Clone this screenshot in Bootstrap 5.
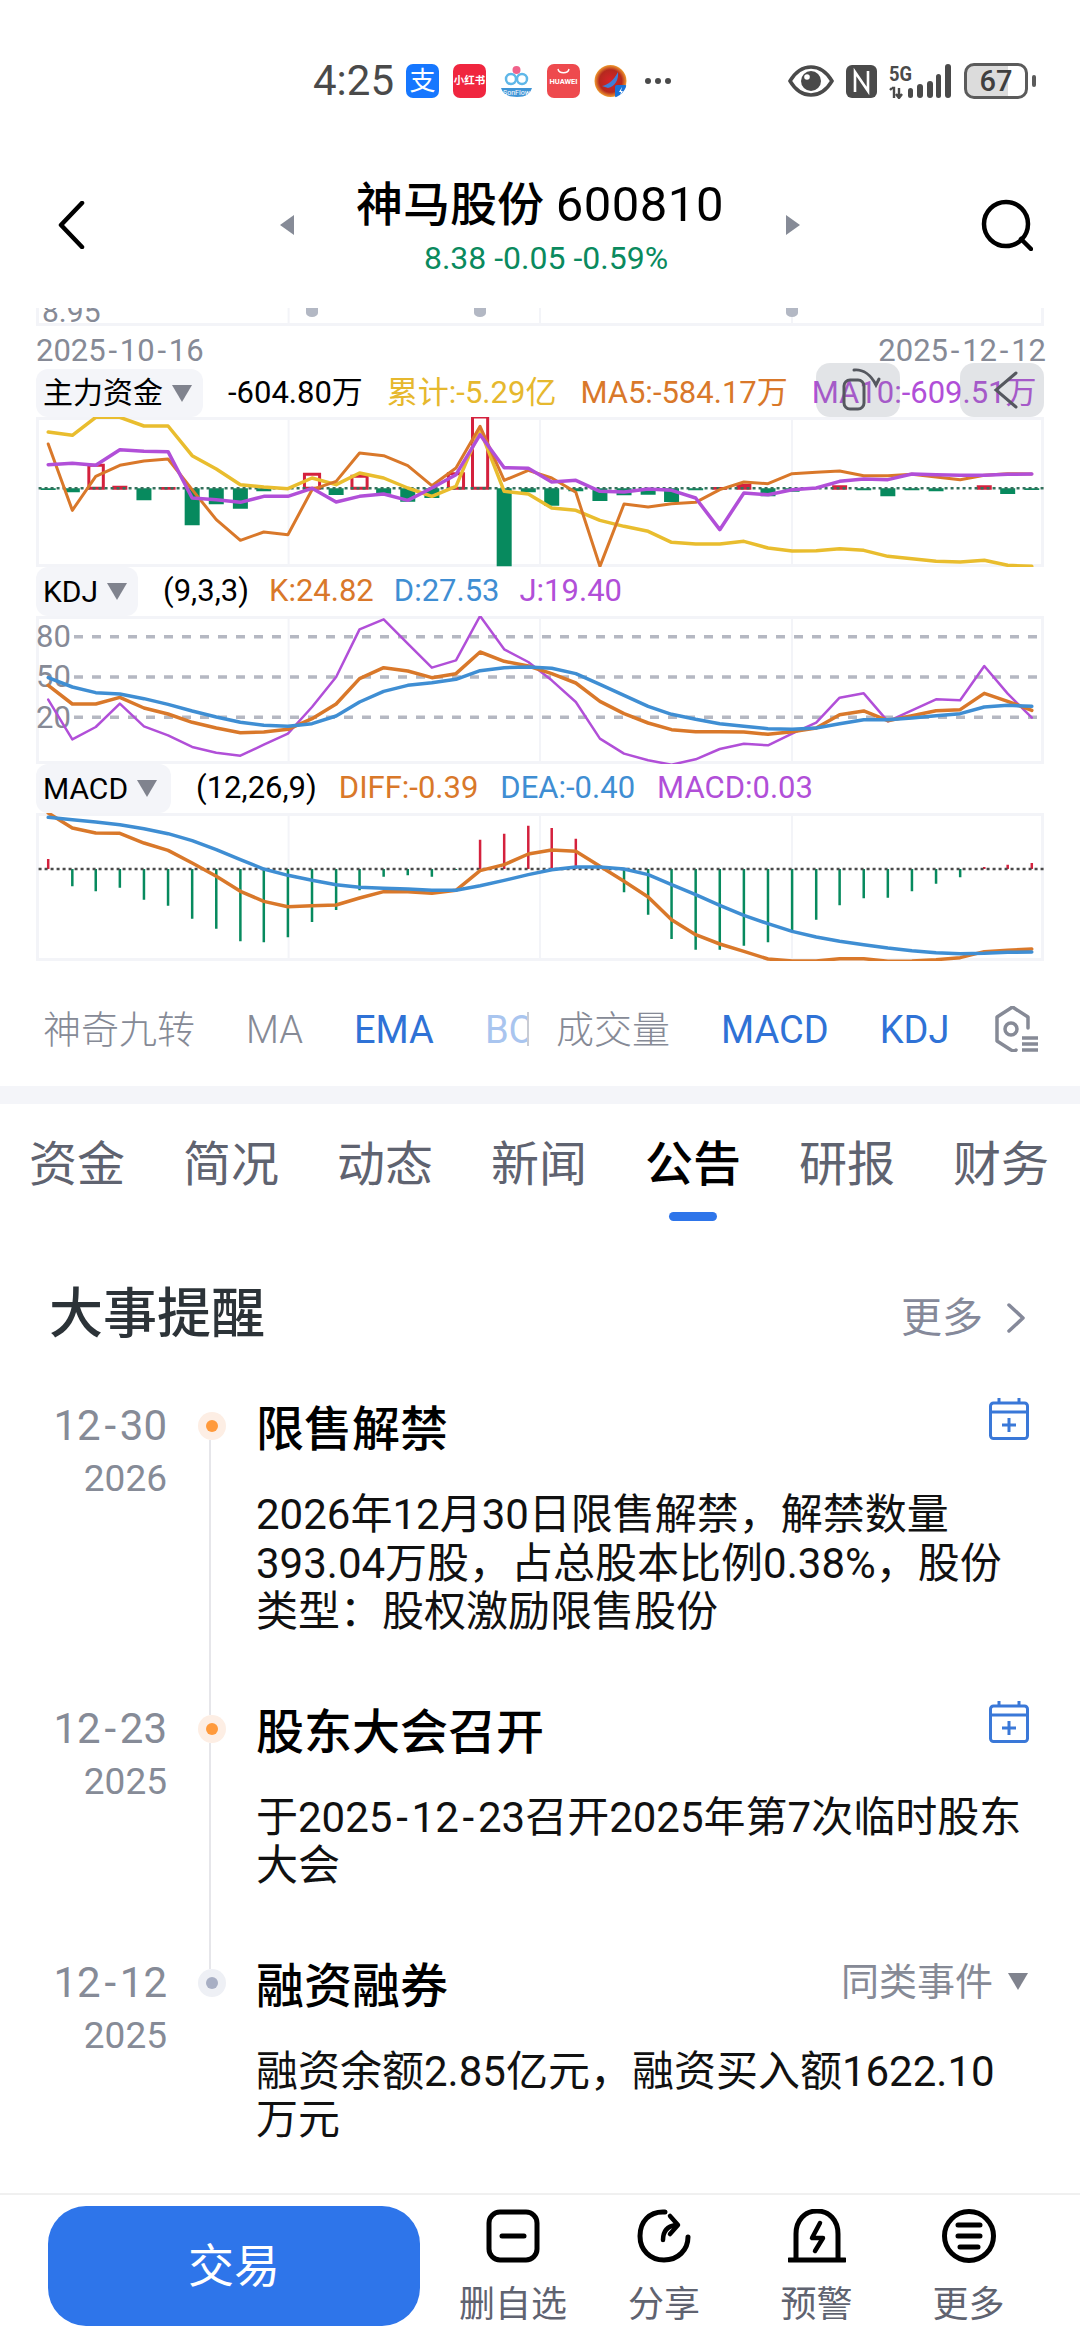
<!DOCTYPE html>
<html lang="zh">
<head>
<meta charset="utf-8">
<title>神马股份 600810</title>
<link href="https://cdn.jsdelivr.net/npm/bootstrap@5.3.0/dist/css/bootstrap.min.css" rel="stylesheet">
<style>
html,body{margin:0;background:#fff}
body{font-family:Roboto,"Noto Sans CJK SC",sans-serif;width:1080px;height:2340px;overflow:hidden;color:#000}
svg{display:block;flex:none}
.ln{fill:none;stroke-linejoin:round;stroke-linecap:round;vector-effect:non-scaling-stroke}
.bar,.hol{vector-effect:non-scaling-stroke}
.bar{fill:none}
.hol{fill:#fff;stroke:#d4213d;stroke-width:3}
.y{stroke:#e9bd2e;stroke-width:3.5}.o{stroke:#d9782a;stroke-width:3}.p{stroke:#b14fd8;stroke-width:3.5}.pt{stroke:#b14fd8;stroke-width:2.5}.b{stroke:#3f8ed3;stroke-width:3.5}.ot{stroke:#d9782a;stroke-width:3.5}
.rd{stroke:#d4213d}.gr{stroke:#078a5e}
.frm{fill:none;stroke:#f3f4f8;stroke-width:3}.grd{stroke:#f3f4f8;stroke-width:2}
.hy{margin:0 .09em}
.statusbar{height:162px;padding:0 44px 0 313px;color:#4a4a4a}
.clock{font-size:42px;line-height:1;width:93px}
.appi{width:33px;height:34px;border-radius:7px;margin-right:14px;color:#fff;overflow:hidden}
.ali{background:#1677ff;font-size:26px;line-height:34px;text-align:center}
.xhs{background:#f0263f;font-size:10.5px;line-height:34px;text-align:center;font-weight:700;white-space:nowrap}
.hw{background:#ee4a4e;font-size:7.5px;text-align:center;font-weight:700;line-height:1}
.dots{margin-left:4px}
.gap12{margin-left:12px}
.batt{width:64px;height:36px;border:3px solid #5b5b5b;border-radius:10px;font-size:29px;font-weight:500;line-height:30px;text-align:center;background:linear-gradient(90deg,#dcdcdc 70%,#fff 70%);color:#3f3f3f;margin-left:13px}
.nub{width:4px;height:12px;background:#5b5b5b;border-radius:2px;margin-left:4px}
.hdr{height:146px;padding:0 47px 0 57px}
.backi{margin-top:39px}
.srchi{margin-top:37px}
.ttl{font-size:47px;line-height:52px;font-weight:500;white-space:nowrap}
.dg{font-size:49px;letter-spacing:.5px;font-weight:400}
.subt{font-size:32px;line-height:32px;color:#0a8a5e;margin-top:11px;white-space:nowrap;padding-left:12px}
.hmid{width:520px;margin:17px 0 0 14px}
.tria{margin-top:36px}
.dts{height:43px;padding:7px 34px 0 36px;font-size:31px;line-height:36px;color:#868a96}
.lrow{height:48px;padding-left:36px;font-size:31px;line-height:48px;white-space:nowrap}
.lrow.h49{height:49px}
.gap20{margin-right:20px}
.gap22{margin-right:22px}
.chip{background:#f4f5f9;border-radius:12px;height:100%;padding:0 11px 0 7px;gap:9px;margin-right:25px;font-size:30px}
.chipw{padding-right:14px}
.tri{width:0;height:0;border-left:10px solid transparent;border-right:10px solid transparent;border-top:17px solid #80838e}
.cy{color:#e6b82e}.co{color:#d9782a}.cp{color:#b14fd8}.cb{color:#3f8ed3}
.ovb{position:absolute;top:-6px;width:84px;height:54px;background:rgba(125,130,145,.22);border-radius:14px}
.ovb1{left:816px}.ovb2{left:960px}
.inds{height:125px;font-size:38px;line-height:44px;color:#868a96;white-space:nowrap;font-weight:300;padding-left:43px}
.indt{margin-top:47px}
.ml51{margin-left:51px}
.ml25{margin-left:27px}
.blu{color:#2f72d6;font-weight:400}
.fade1{color:#a9c5ef;width:42px;overflow:hidden;height:44px}
.vbar{width:2px;height:34px;background:#c9ccd4;margin-top:51px}
.setic{margin:45px 0 0 41px}
.band{height:18px;background:#f4f5f9}
.tabsr{padding:31px 31px 0 29px;font-size:48px;line-height:60px;color:#5f6370}
.tabi{width:96px;text-align:center;white-space:nowrap}
.tabon{color:#000;font-weight:500}
.tabbar{width:48px;height:9px;border-radius:5px;background:#2e75ea;margin:17px auto 0}
.sech{margin:59px 55px 0 49px;height:70px}
.secht{font-size:54px;line-height:70px;color:#2c3338;font-weight:500}
.more{font-size:41px;line-height:70px;color:#85899a;gap:24px;margin-top:6px}
.tl{margin-top:50px}
.tli{padding-bottom:66px}
.dcol{width:167px;text-align:right;flex:none;color:#868b97}
.dm{font-size:42px;line-height:52px}
.dy{font-size:37px;line-height:54px}
.dotc{width:89px;flex:none;position:relative}
.rail{position:absolute;left:42px;top:40px;bottom:-78px;width:2px;background:#e6e6ea}
.dot{position:absolute;left:31px;top:12px;width:28px;height:28px;border-radius:50%;background:#fdeee4}
.dot::after{content:"";position:absolute;left:8px;top:8px;width:12px;height:12px;border-radius:50%;background:#ff9a3c}
.dot.off{background:#eef0f5}
.dot.off::after{background:#a8afc4}
.tcol{width:774px;flex:none}
.tlt{font-size:48px;line-height:60px;font-weight:500}
.tbd{font-size:42px;line-height:48.5px;margin-top:31px;color:#111}
.cal{margin:-2px 1px 0 0}
.same{font-size:38px;line-height:50px;color:#868a96;gap:15px;margin:0 2px 0 0;height:50px}
.botb{height:148px;border-top:2px solid #f0f0f0;padding-left:48px}
.trade{width:372px;height:120px;margin-top:11px;border-radius:38px;background:#2e75ea;color:#fff;font-size:46px;border:0;flex:none}
.trade:hover,.trade:focus{background:#2e75ea;color:#fff}
.acts{padding-left:39px;color:#5f6370;font-size:36px;line-height:40px;white-space:nowrap}
.acti{padding-top:14px}
.acti svg{margin:0 auto 22px}
.acti1{width:108px;margin-right:61px;flex:none}
.acti2{width:72px;margin-right:80px;flex:none}
.acti3{width:73px;margin-right:79px;flex:none}
.acti4{width:73px;flex:none}
</style>
</head>
<body class="d-flex flex-column">
<div class="flex-grow-1 overflow-hidden">

<div class="statusbar d-flex align-items-center justify-content-between">
  <div class="d-flex align-items-center">
    <div class="clock">4:25</div>
    <div class="appi ali">支</div>
    <div class="appi xhs">小红书</div>
    <div class="appi"><svg width="33" height="34" viewBox="0 0 33 34"><circle cx="16.5" cy="6" r="4" fill="#f0628a"/><circle cx="11" cy="15" r="5" fill="none" stroke="#5fb7e8" stroke-width="2.5"/><circle cx="22" cy="15" r="5" fill="none" stroke="#5fb7e8" stroke-width="2.5"/><path d="M1 24h31c-2 6-6 9-15 9S3 30 1 24z" fill="#3f95d6"/><text x="16.5" y="31" font-size="7" fill="#fff" text-anchor="middle" font-family="Roboto">SonFlow</text></svg></div>
    <div class="appi hw"><svg width="33" height="14" viewBox="0 0 33 14"><path d="M11 5c1 5 10 5 11 0" fill="none" stroke="#fff" stroke-width="1.4"/></svg><div>HUAWEI</div></div>
    <div class="appi rounded-circle"><svg width="33" height="34" viewBox="0 0 33 34"><defs><radialGradient id="gz"><stop offset="0" stop-color="#d8232a"/><stop offset=".7" stop-color="#b5291f"/><stop offset="1" stop-color="#f09a2e"/></radialGradient></defs><circle cx="16.5" cy="17" r="16" fill="url(#gz)"/><path d="M8 22c6-1 12-6 16-14 1 7-3 15-10 16z" fill="#3f7fd8"/><rect x="21" y="21" width="12" height="13" rx="2" fill="#1a73d8"/><path d="M28 23l-3 5h2l-1 4 3-5h-2z" fill="#fff"/></svg></div>
    <svg class="dots" width="26" height="6" viewBox="0 0 26 6"><circle cx="3" cy="3" r="3" fill="#4a4a4a"/><circle cx="13" cy="3" r="3" fill="#4a4a4a"/><circle cx="23" cy="3" r="3" fill="#4a4a4a"/></svg>
  </div>
  <div class="d-flex align-items-center">
    <svg width="46" height="32" viewBox="0 0 46 32"><path d="M2 16C8 6 15 2 23 2s15 4 21 14c-6 10-13 14-21 14S8 26 2 16z" fill="none" stroke="#4a4a4a" stroke-width="3.5"/><circle cx="23" cy="16" r="10" fill="#4a4a4a"/><circle cx="19" cy="12" r="2.8" fill="#fff"/></svg>
    <svg class="gap12" width="31" height="33" viewBox="0 0 31 33"><rect width="31" height="33" rx="6" fill="#4a4a4a"/><path d="M9 27V7l13 19V6" fill="none" stroke="#fff" stroke-width="2.6"/></svg>
    <svg class="gap12" width="62" height="36" viewBox="0 0 62 36"><text x="0" y="18" font-size="20" font-weight="700" fill="#4a4a4a" font-family="Roboto" textLength="23" lengthAdjust="spacingAndGlyphs">5G</text><path d="M3 25h2v10M1 27l2-2M10 25v9M7 31l3 4 3-4" fill="none" stroke="#4a4a4a" stroke-width="2.4"/><rect x="19" y="25" width="5" height="10" rx="2.5" fill="#4a4a4a"/><rect x="28" y="21" width="6" height="14" rx="3" fill="#4a4a4a"/><rect x="38" y="18" width="6" height="17" rx="3" fill="#4a4a4a"/><rect x="47" y="11" width="5" height="24" rx="2.5" fill="#4a4a4a"/><rect x="56" y="1" width="6" height="34" rx="3" fill="#4a4a4a"/></svg>
    <div class="batt">67</div>
    <div class="nub"></div>
  </div>
</div>

<div class="hdr d-flex align-items-start justify-content-between">
  <svg class="backi" width="28" height="48" viewBox="0 0 28 48"><path d="M25 2L4 24l21 22" fill="none" stroke="#000" stroke-width="4.5" stroke-linecap="round" stroke-linejoin="round"/></svg>
  <div class="hmid d-flex justify-content-between">
    <svg class="tria" width="14" height="20" viewBox="0 0 14 20"><path d="M14 0v20L0 10z" fill="#868b97"/></svg>
    <div class="text-center"><div class="ttl">神马股份 <span class="dg">600810</span></div><div class="subt">8.38 -0.05 -0.59%</div></div>
    <svg class="tria" width="14" height="20" viewBox="0 0 14 20"><path d="M0 0v20l14-10z" fill="#868b97"/></svg>
  </div>
  <svg class="srchi" width="52" height="52" viewBox="0 0 52 52"><circle cx="25" cy="25" r="22" fill="none" stroke="#000" stroke-width="4.5"/><path d="M40 40l10 10" stroke="#000" stroke-width="4.5" stroke-linecap="round"/></svg>
</div>

<svg width="1080" height="18" viewBox="0 0 1080 18"><text x="42" y="14" font-size="30" fill="#868a96" font-family="Roboto">8.95</text><path class="grd" d="M288.6 0V16M540 0V16M792 0V16"/><path d="M37.5 0V16.5H1042.5V0" class="frm"/><path d="M306 0h12v5a6 4 0 0 1-12 0zM474 0h12v5a6 4 0 0 1-12 0zM786 0h12v5a6 4 0 0 1-12 0z" fill="#b3b8c4"/></svg>

<div class="dts d-flex justify-content-between"><span>2025<span class="hy">-</span>10<span class="hy">-</span>16</span><span>2025<span class="hy">-</span>12<span class="hy">-</span>12</span></div>

<div class="lrow d-flex position-relative">
  <div class="chip d-flex align-items-center"><span>主力资金</span><span class="tri"></span></div>
  <span class="me-4">-604.80万</span><span class="cy me-4">累计:-5.29亿</span><span class="co me-4">MA5:-584.17万</span><span class="cp">MA10:-609.51万</span>
  <div class="ovb ovb1"><svg width="84" height="54" viewBox="0 0 84 54"><rect x="28" y="17" width="20" height="29" rx="6" fill="none" stroke="#55585f" stroke-width="3"/><path d="M38 7c9-1 17 5 22 15l3-6" fill="none" stroke="#55585f" stroke-width="3" stroke-linecap="round"/></svg></div>
  <div class="ovb ovb2"><svg width="84" height="54" viewBox="0 0 84 54"><path d="M56 10L36 27l20 17" fill="none" stroke="#55585f" stroke-width="3" stroke-linecap="round"/></svg></div>
</div>

<svg width="1080" height="150" viewBox="0 0 1080 150">
  <path class="grd" d="M288.6 0V150M540 0V150M792 0V150"/>
  <rect class="frm" x="37.5" y="1.5" width="1005" height="147"/>
  <g transform="translate(0,-117.33) scale(0.68878,0.33333)">
    <path class="bar gr" stroke-width="15" d="M70 566V571M105 566V578M209 566V602M279 566V677M314 566V614M349 566V627M383 566V575M488 566V586M557 566V582M592 566V606M627 566V595M732 566V800M767 566V578M801 566V618M836 566V575M871 566V604M906 566V587M941 566V585M975 566V607M1010 566V572M1115 566V590M1150 566V576M1254 566V572M1289 566V590M1324 566V572M1359 566V575M1463 566V583M1498 566V571"/>
    <path class="bar rd" stroke-width="15" d="M174 558V570M244 562V570M1045 562V570M1080 552V570M1219 557V570M1429 557V570"/>
    <path class="hol" d="M129 497H150V566H129ZM442 524H464V566H442ZM511 530H533V566H511ZM651 522H673V566H651ZM686 352H708V566H686Z"/>
    <path class="bar" d="M56 566H1516" stroke="#35705c" stroke-width="2.5" stroke-dasharray="3 3"/>
    <polyline class="ln y" points="70,397 105,407 139,353 174,353 209,379 244,379 279,468 314,508 349,555 383,562 418,567 453,535 488,555 522,520 557,535 592,565 627,590 662,560 697,390 732,575 767,583 801,625 836,632 871,662 906,680 941,695 975,728 1010,733 1045,733 1080,725 1115,745 1150,754 1185,753 1219,747 1254,752 1289,770 1324,777 1359,785 1394,787 1429,782 1463,797 1498,800"/>
    <polyline class="ln o" points="70,433 105,632 139,530 174,497 209,484 244,478 279,570 314,660 349,722 383,697 418,705 453,570 488,545 522,460 557,468 592,498 627,558 662,505 697,380 732,542 767,512 801,535 836,578 871,800 906,613 941,622 975,612 1010,608 1045,570 1080,547 1115,552 1150,522 1185,518 1219,514 1254,528 1289,528 1324,524 1359,532 1394,540 1429,527 1463,522 1498,523"/>
    <polyline class="ln p" points="70,495 105,491 139,497 174,450 209,455 244,456 279,595 314,600 349,608 383,590 418,590 453,566 488,607 522,590 557,583 592,602 627,565 662,525 697,405 732,504 767,506 801,547 836,542 871,575 906,577 941,568 975,572 1010,595 1045,690 1080,580 1115,585 1150,570 1185,565 1219,545 1254,538 1289,540 1324,523 1359,525 1394,527 1429,527 1463,524 1498,523"/>
  </g>
</svg>

<div class="lrow h49 d-flex">
  <div class="chip d-flex align-items-center"><span>KDJ</span><span class="tri"></span></div>
  <span class="gap20">(9,3,3)</span><span class="co gap20">K:24.82</span><span class="cb gap20">D:27.53</span><span class="cp">J:19.40</span>
</div>

<svg width="1080" height="148" viewBox="0 0 1080 148">
  <path class="grd" d="M288.6 0V148M540 0V148M792 0V148"/>
  <rect class="frm" x="37.5" y="1.5" width="1005" height="145"/>
  <path d="M74 20.7H1044M74 61H1044M74 101.3H1044" stroke="#b5b8c2" stroke-width="3.5" stroke-dasharray="9 9"/>
  <text x="36" y="31" font-size="31" fill="#868a96" font-family="Roboto">80</text>
  <text x="36" y="71" font-size="31" fill="#868a96" font-family="Roboto">50</text>
  <text x="36" y="112" font-size="31" fill="#868a96" font-family="Roboto">20</text>
  <g transform="translate(0,-55.67) scale(0.68878,0.33333)">
    <polyline class="ln pt" points="70,418 105,537 139,500 174,430 209,498 244,525 279,560 314,577 349,586 383,553 418,520 453,440 488,350 522,207 557,177 592,250 627,322 662,300 697,167 732,267 767,305 801,360 836,425 871,535 906,580 941,600 975,613 1010,597 1045,566 1080,550 1115,555 1150,520 1185,487 1219,412 1254,399 1289,483 1324,450 1359,417 1394,420 1429,317 1463,400 1498,472"/>
    <polyline class="ln ot" points="70,375 105,431 139,431 174,411 209,443 244,461 279,486 314,503 349,517 383,515 418,507 453,475 488,431 522,355 557,322 592,332 627,352 662,340 697,275 732,303 767,317 801,340 836,368 871,423 906,460 941,488 975,508 1010,514 1045,514 1080,515 1115,522 1150,514 1185,503 1219,463 1254,452 1289,481 1324,466 1359,451 1394,448 1429,399 1463,423 1498,450"/>
    <polyline class="ln b" points="70,352 105,380 139,397 174,401 209,415 244,432 279,452 314,470 349,486 383,495 418,498 453,490 488,467 522,425 557,393 592,375 627,367 662,357 697,331 732,322 767,320 801,324 836,340 871,372 906,405 941,438 975,462 1010,477 1045,490 1080,498 1115,505 1150,507 1185,503 1219,490 1254,478 1289,478 1324,473 1359,466 1394,460 1429,440 1463,435 1498,438"/>
  </g>
</svg>

<div class="lrow h49 d-flex">
  <div class="chip chipw d-flex align-items-center"><span>MACD</span><span class="tri"></span></div>
  <span class="gap22">(12,26,9)</span><span class="co gap22">DIFF:-0.39</span><span class="cb gap22">DEA:-0.40</span><span class="cp">MACD:0.03</span>
</div>

<svg width="1080" height="148" viewBox="0 0 1080 148">
  <path class="grd" d="M288.6 0V148M540 0V148M792 0V148"/>
  <rect class="frm" x="37.5" y="1.5" width="1005" height="145"/>
  <g transform="translate(0,-53.33) scale(0.68878,0.33333)">
    <path class="bar gr" stroke-width="2.5" d="M105 328V380M139 328V395M174 328V384M209 328V420M244 328V438M279 328V477M314 328V507M349 328V545M383 328V548M418 328V533M453 328V487M488 328V451M522 328V392M557 328V351M592 328V347M627 328V351M662 328V331M906 328V398M941 328V465M975 328V538M1010 328V570M1045 328V570M1080 328V558M1115 328V548M1150 328V512M1185 328V480M1219 328V437M1254 328V416M1289 328V414M1324 328V395M1359 328V372M1394 328V353"/>
    <path class="bar rd" stroke-width="2.5" d="M70 298V328M697 240V328M732 222V328M767 198V328M801 205V328M836 237V328M1429 322V328M1463 315V328M1498 310V328"/>
    <path class="bar" d="M56 328H1516" stroke="#4a4a4a" stroke-width="2.5" stroke-dasharray="3 3"/>
    <polyline class="ln ot" points="70,160 105,205 139,220 174,221 209,250 244,272 279,310 314,350 349,395 383,425 418,441 453,438 488,436 522,415 557,396 592,396 627,401 662,392 697,333 732,315 767,283 801,271 836,275 871,320 906,365 941,412 975,480 1010,525 1045,553 1080,575 1115,598 1150,604 1185,604 1219,597 1254,597 1289,605 1324,604 1359,600 1394,594 1429,576 1463,572 1498,568"/>
    <polyline class="ln b" points="70,173 105,180 139,187 174,195 209,207 244,222 279,243 314,270 349,300 383,328 418,347 453,362 488,375 522,383 557,386 592,388 627,392 662,392 697,378 732,362 767,345 801,330 836,322 871,322 906,328 941,345 975,375 1010,405 1045,437 1080,467 1115,492 1150,515 1185,532 1219,545 1254,555 1289,565 1324,573 1359,579 1394,582 1429,581 1463,578 1498,577"/>
  </g>
</svg>

<div class="inds d-flex">
  <span class="indt">神奇九转</span>
  <span class="indt ml51">MA</span>
  <span class="indt ml51 blu">EMA</span>
  <span class="indt ml51 blu fade1">BOLL</span>
  <span class="vbar"></span>
  <span class="indt ml25">成交量</span>
  <span class="indt ml51 blu">MACD</span>
  <span class="indt ml51 blu">KDJ</span>
  <svg class="setic" width="48" height="46" viewBox="0 0 48 46"><path d="M21 2L7 11v24l14 9c2 1 4 1 5 0M21 2c1-1 2-1 3 0l14 9v11" fill="none" stroke="#868a96" stroke-width="3.5" stroke-linecap="round" stroke-linejoin="round"/><circle cx="21" cy="23" r="6" fill="none" stroke="#868a96" stroke-width="3.5"/><path d="M32 32h16M32 38h16M32 44h16" stroke="#868a96" stroke-width="3.5"/></svg>
</div>

<div class="band"></div>

<div class="tabsr d-flex justify-content-between">
  <div class="tabi">资金</div>
  <div class="tabi">简况</div>
  <div class="tabi">动态</div>
  <div class="tabi">新闻</div>
  <div class="tabi tabon">公告<div class="tabbar"></div></div>
  <div class="tabi">研报</div>
  <div class="tabi">财务</div>
</div>

<div class="sech d-flex justify-content-between align-items-center">
  <div class="secht">大事提醒</div>
  <div class="more d-flex align-items-center"><span>更多</span><svg width="18" height="30" viewBox="0 0 18 30"><path d="M2 2l14 13L2 28" fill="none" stroke="#85899a" stroke-width="3.5" stroke-linecap="round" stroke-linejoin="round"/></svg></div>
</div>

<div class="tl">
  <div class="tli d-flex">
    <div class="dcol"><div class="dm">12<span class="hy">-</span>30</div><div class="dy">2026</div></div>
    <div class="dotc"><span class="dot"></span><span class="rail"></span></div>
    <div class="tcol">
      <div class="d-flex justify-content-between"><div class="tlt">限售解禁</div>
        <svg class="cal" width="40" height="42" viewBox="0 0 40 42"><rect x="1.5" y="5" width="37" height="35.5" rx="3" fill="none" stroke="#3a78d8" stroke-width="3"/><path d="M2 14h36M10 0v5M30 0v5M20 20v14M13 27h14" stroke="#3a78d8" stroke-width="3" fill="none"/></svg>
      </div>
      <div class="tbd">2026年12月30日限售解禁，解禁数量393.04万股，占总股本比例0.38%，股份类型：股权激励限售股份</div>
    </div>
  </div>
  <div class="tli d-flex">
    <div class="dcol"><div class="dm">12<span class="hy">-</span>23</div><div class="dy">2025</div></div>
    <div class="dotc"><span class="dot"></span><span class="rail"></span></div>
    <div class="tcol">
      <div class="d-flex justify-content-between"><div class="tlt">股东大会召开</div>
        <svg class="cal" width="40" height="42" viewBox="0 0 40 42"><rect x="1.5" y="5" width="37" height="35.5" rx="3" fill="none" stroke="#3a78d8" stroke-width="3"/><path d="M2 14h36M10 0v5M30 0v5M20 20v14M13 27h14" stroke="#3a78d8" stroke-width="3" fill="none"/></svg>
      </div>
      <div class="tbd"><div>于2025<span class="hy">-</span>12<span class="hy">-</span>23召开2025年第7次临时股东</div><div>大会</div></div>
    </div>
  </div>
  <div class="tli d-flex">
    <div class="dcol"><div class="dm">12<span class="hy">-</span>12</div><div class="dy">2025</div></div>
    <div class="dotc"><span class="dot off"></span></div>
    <div class="tcol">
      <div class="d-flex justify-content-between"><div class="tlt">融资融券</div>
        <div class="same d-flex align-items-center"><span>同类事件</span><span class="tri"></span></div>
      </div>
      <div class="tbd">融资余额2.85亿元，融资买入额1622.10万元</div>
    </div>
  </div>
</div>
</div>

<div class="botb d-flex">
  <button type="button" class="btn trade">交易</button>
  <div class="acts d-flex">
    <div class="acti acti1 text-center"><svg width="54" height="54" viewBox="0 0 54 54"><rect x="3" y="3" width="48" height="48" rx="11" fill="none" stroke="#000" stroke-width="5"/><path d="M16 27h22" stroke="#000" stroke-width="5" stroke-linecap="round"/></svg>删自选</div>
    <div class="acti acti2 text-center"><svg width="54" height="54" viewBox="0 0 54 54"><path d="M28 3C12 2 3 13 3 27s10 24 24 24 24-10 24-23" fill="none" stroke="#000" stroke-width="5" stroke-linecap="round"/><path d="M26 31c0-9 5-14 13-15M33 7l8 9-8 9" fill="none" stroke="#000" stroke-width="4.5" stroke-linecap="round" stroke-linejoin="round"/></svg>分享</div>
    <div class="acti acti3 text-center"><svg width="58" height="54" viewBox="0 0 58 54"><path d="M8 50V25C8 11 17 2 29 2s21 9 21 23v25" fill="none" stroke="#000" stroke-width="5"/><path d="M1 51h56" stroke="#000" stroke-width="5" stroke-linecap="round"/><path d="M32 14l-8 15h11l-8 13" fill="none" stroke="#000" stroke-width="4.5" stroke-linecap="round" stroke-linejoin="round"/></svg>预警</div>
    <div class="acti acti4 text-center"><svg width="54" height="54" viewBox="0 0 54 54"><circle cx="27" cy="27" r="24.5" fill="none" stroke="#000" stroke-width="5"/><path d="M16 16h22M16 27h22M18 38h18" stroke="#000" stroke-width="5" stroke-linecap="round"/></svg>更多</div>
  </div>
</div>
<script src="https://cdn.jsdelivr.net/npm/bootstrap@5.3.0/dist/js/bootstrap.bundle.min.js"></script>
</body>
</html>
